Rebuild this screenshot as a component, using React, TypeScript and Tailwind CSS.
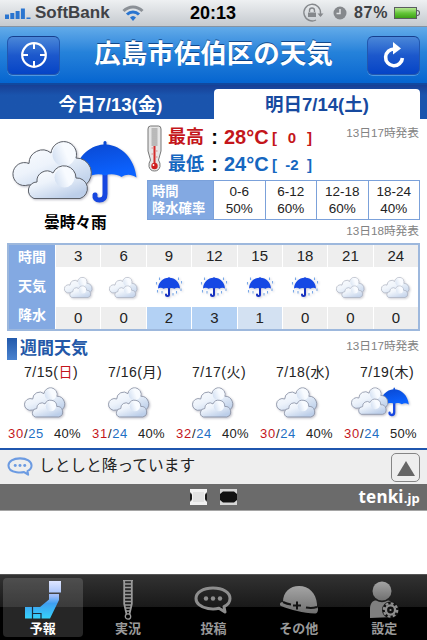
import type { ReactNode } from "react";
import clsx from "clsx";

type Weather = "cloud" | "rain" | "cloudRain";

interface Hour {
  time: number;
  weather: Weather;
  rain: number;
}

interface Day {
  date: string;
  weekday: string;
  holiday?: boolean;
  weather: Weather;
  high: number;
  low: number;
  chance: number;
}

const chances = [
  { range: "0-6", value: "50%" },
  { range: "6-12", value: "60%" },
  { range: "12-18", value: "60%" },
  { range: "18-24", value: "40%" },
];

const hours: Hour[] = [
  { time: 3, weather: "cloud", rain: 0 },
  { time: 6, weather: "cloud", rain: 0 },
  { time: 9, weather: "rain", rain: 2 },
  { time: 12, weather: "rain", rain: 3 },
  { time: 15, weather: "rain", rain: 1 },
  { time: 18, weather: "rain", rain: 0 },
  { time: 21, weather: "cloud", rain: 0 },
  { time: 24, weather: "cloud", rain: 0 },
];

const days: Day[] = [
  { date: "7/15", weekday: "日", holiday: true, weather: "cloud", high: 30, low: 25, chance: 40 },
  { date: "7/16", weekday: "月", weather: "cloud", high: 31, low: 24, chance: 40 },
  { date: "7/17", weekday: "火", weather: "cloud", high: 32, low: 24, chance: 40 },
  { date: "7/18", weekday: "水", weather: "cloud", high: 30, low: 24, chance: 40 },
  { date: "7/19", weekday: "木", weather: "cloudRain", high: 30, low: 24, chance: 50 },
];

// Shared gradients, referenced by id from every weather icon
function Gradients() {
  return (
    <svg className="absolute h-0 w-0">
      <defs>
        <linearGradient id="cloud" x1="0" y1="0" x2="0.7" y2="1">
          <stop offset="0" stopColor="#ffffff" />
          <stop offset="0.55" stopColor="#edf3fb" />
          <stop offset="1" stopColor="#c3d4ec" />
        </linearGradient>
        <linearGradient id="cloudFront" x1="0" y1="0" x2="0.6" y2="1">
          <stop offset="0" stopColor="#ffffff" />
          <stop offset="0.5" stopColor="#edf3fb" />
          <stop offset="1" stopColor="#bccee9" />
        </linearGradient>
        <linearGradient id="puff" x1="0" y1="0.7" x2="1" y2="0.3">
          <stop offset="0" stopColor="#d3e0f2" />
          <stop offset="0.6" stopColor="#f8fbff" />
        </linearGradient>
        <linearGradient id="umbrella" x1="0" y1="0" x2="0.3" y2="1">
          <stop offset="0" stopColor="#0a45cc" />
          <stop offset="1" stopColor="#0b62ff" />
        </linearGradient>
        <linearGradient id="japan" x1="0" y1="0" x2="0" y2="1">
          <stop offset="0" stopColor="#dfe6ff" />
          <stop offset="0.4" stopColor="#9dbcf8" />
          <stop offset="0.6" stopColor="#3f9ff0" />
          <stop offset="1" stopColor="#35d2fb" />
        </linearGradient>
        <linearGradient id="tabIcon" x1="0" y1="0" x2="0" y2="1">
          <stop offset="0" stopColor="#a4a4a4" />
          <stop offset="1" stopColor="#707070" />
        </linearGradient>
      </defs>
    </svg>
  );
}

function CloudShape({ thin }: { thin?: boolean }) {
  const stroke = thin ? "#8a92a6" : "#5c6068";
  const width = thin ? 1.7 : 1;
  return (
    <g stroke={stroke} strokeWidth={width} strokeLinejoin="round">
      <path
        d="M28 185A11.500 11.500 0 1 1 29 163.500A13.500 13.500 0 0 1 51 153A12.800 12.800 0 1 1 76 158A15 15 0 0 1 86 184.500Z"
        fill="url(#cloud)"
      />
      <circle cx="64" cy="154.500" r="11.500" fill="url(#puff)" stroke="none" />
      <path
        d="M34 198.500A8.500 8.500 0 0 1 37 182A10 10 0 0 1 53 173A12 12 0 0 1 76 178A10.500 10.500 0 0 1 80 198.500Z"
        fill="url(#cloudFront)"
      />
      <circle cx="64.500" cy="177.500" r="10" fill="url(#puff)" stroke="none" />
    </g>
  );
}

function UmbrellaShape() {
  return (
    <g>
      <path
        d="M105 168V194C105 198 103 200 99.500 200C96 200 94.500 198 95 195"
        fill="none"
        stroke="#1747e0"
        strokeWidth="5"
        strokeLinecap="round"
      />
      <path
        d="M103.500 142Q105 140 106.500 142V144.500C121 145.500 134.500 158 136.500 177.500C131 174 126 174 121.500 177C117 174 110 173.500 105 175.500C100 173.500 93 174 88.500 177C84 174 79 174 73.500 177.500C75.500 158 89 145.500 103.500 144.500Z"
        fill="url(#umbrella)"
      />
    </g>
  );
}

function WeatherIcon({ weather, className, thin }: { weather: Weather; className?: string; thin?: boolean }) {
  if (weather === "rain") {
    return (
      <svg viewBox="0 0 28 22" className={className}>
        <path d="M14 11V18.500C14 20.500 11 20.500 11 18.500" fill="none" stroke="#1530c0" strokeWidth="2" strokeLinecap="round" />
        <path
          d="M13.500 1H14.500V1.700C20 2.100 24.500 5.500 25 12.500C23.200 11.500 21 11.500 19.500 12.800C18 11.700 15.500 11.700 14 12.500C12.500 11.700 10 11.700 8.500 12.800C7 11.500 4.800 11.500 3 12.500C3.500 5.500 8 2.100 13.500 1.700Z"
          fill="#1648e4"
        />
        <path
          d="M4.500 1.500V4M1.500 6V8.500M2.500 14V16.500M7 15V17.500M23.500 1.500V4M26.500 5V7.500M26 12.500V15M21.500 15V17.500M18 17V19.500"
          stroke="#7aa9e8"
          strokeWidth="1.100"
        />
      </svg>
    );
  }
  return (
    <svg viewBox={weather === "cloud" ? "12 140.500 82 59.500" : "12 140 127 64"} className={clsx("drop-shadow-[1px_1px_1px_rgba(0,0,40,0.25)]", className)}>
      {weather === "cloudRain" && <UmbrellaShape />}
      <CloudShape thin={thin} />
    </svg>
  );
}

function StatusBar() {
  return (
    <div className="flex h-[27px] items-center border-b border-[#8593a3] bg-linear-to-b from-[#eef0f2] to-[#c5cacf] pl-[5px] text-[17px] font-bold text-[#3f4246]">
      <svg viewBox="0 0 26 12" className="mt-0.5 h-3 w-[26px]" fill="#2a75d0">
        <path d="M0 6.500h4V11H0zM5.300 5h4v6h-4zM10.600 3h4v8h-4zM15.900 .5h4V11h-4zM21.500 9.500h4V11h-4z" />
      </svg>
      <span className="ml-1 w-[76px]">SoftBank</span>
      <svg viewBox="0 0 22 16" className="ml-[11px] h-4 w-[22px]" fill="none" strokeWidth="3">
        <path d="M1.500 6C7 .5 15 .5 20.500 6" stroke="#8b9096" />
        <path d="M5 9.500C8.500 6 13.500 6 17 9.500" stroke="#2a75d0" />
        <path d="M8 12.500Q11 9.500 14 12.500L11 16Z" fill="#2a75d0" />
      </svg>
      <span className="ml-[46px] w-[48px] text-[18px] text-black">20:13</span>
      <svg viewBox="0 0 22 20" className="ml-[64px] h-5 w-[22px]" fill="none" stroke="#85888c" strokeWidth="1.400">
        <path d="M14 17A8.300 8.300 0 1 1 18.500 10v3" />
        <path d="M15.500 10.500h6l-3 3.500z" fill="#85888c" stroke="none" />
        <path d="M6 9.500h8V14H6z" fill="#85888c" stroke="none" />
        <path d="M7.500 9V7.500a2.500 2.500 0 0 1 5 0V9" />
      </svg>
      <svg viewBox="0 0 14 14" className="ml-[9px] h-3.5 w-3.5">
        <circle cx="7" cy="7" r="6.500" fill="#85888c" />
        <path d="M7 3v4.500H3.500" fill="none" stroke="#e2e4e6" strokeWidth="1.500" />
      </svg>
      <span className="ml-[7px] w-[37px] text-[16px] tracking-[0.7px]">87%</span>
      <div className="ml-[3px] h-3 w-[23px] border border-[#5a5d60] bg-linear-to-b from-[#b5e88f] via-[#64c638] to-[#3da116]" />
      <div className="h-1.5 w-[3px] rounded-r-sm border border-l-0 border-[#5a5d60]" />
    </div>
  );
}

function NavButton({ children }: { children: ReactNode }) {
  return (
    <button className="flex h-[39px] w-[53px] items-center justify-center rounded-[6px] border border-[#2357ae] border-t-[#163f8e] bg-linear-to-b from-[#4b87d8] via-[#1c58cc] via-50% to-[#0544c6] shadow-[0_1px_0_rgba(120,180,240,0.6)]">
      {children}
    </button>
  );
}

function Header() {
  return (
    <header className="flex h-[58px] items-center justify-between border-b-2 border-[#11489f] bg-linear-to-b from-[#62abe9] via-[#2582da] via-45% to-[#0565d0] px-[7px]">
      <NavButton>
        <svg viewBox="0 0 28 28" className="h-7 w-7" fill="none" stroke="white">
          <circle cx="14" cy="14" r="11.800" strokeWidth="2.200" />
          <path d="M14 2v6M14 20v6M2 14h6M20 14h6" strokeWidth="2" />
        </svg>
      </NavButton>
      <h1 className="-mt-0.5 text-[26.500px] leading-none font-bold text-white text-shadow-[0_-1px_0_rgba(0,40,100,0.7)]">
        広島市佐伯区の天気
      </h1>
      <NavButton>
        <svg viewBox="0 0 24 28" className="h-7 w-6">
          <path d="M12.500 8A8.400 8.400 0 1 0 20.400 17" fill="none" stroke="white" strokeWidth="3.600" />
          <path d="M11 1L19 7.500L11 13.500Z" fill="white" />
        </svg>
      </NavButton>
    </header>
  );
}

function DayTabs() {
  return (
    <div className="flex h-[34px] bg-linear-to-b from-[#173f95] to-[#1a54ad] to-30% pt-1 pr-[7px] text-[18.500px] leading-[31px] font-bold">
      <div className="w-[214px] pl-[7px] text-center text-white">今日7/13(金)</div>
      <div className="flex-1 rounded-t-[4px] bg-white text-center text-[#174a9f]">明日7/14(土)</div>
    </div>
  );
}

function Thermometer() {
  return (
    <svg viewBox="0 0 15 48" className="h-12 w-[15px]">
      <path
        d="M3.500 1H11.500Q14 1 14 4V26L11.500 35Q13.500 38 13 41.500Q12 46 7.500 46Q3 46 2 41.500Q1.500 38 3.500 35L1 26V4Q1 1 3.500 1Z"
        fill="#e6e6e6"
        stroke="#777"
      />
      <path d="M4.500 4h6M4.500 6h6M4.500 8h6M4.500 10h6M4.500 12h6M4.500 14h6M4.500 16h6M4.500 18h6M4.500 20h6" stroke="#8d8d8d" />
      <path d="M7.500 21V40" stroke="#d42b2b" strokeWidth="2" />
      <path d="M4.500 23h2M8.500 26h2M4.500 29h2M8.500 32h2" stroke="#d88" />
      <circle cx="7.500" cy="41" r="3.200" fill="#cf1e1e" />
      <circle cx="6.500" cy="40" r="0.900" fill="white" />
    </svg>
  );
}

function Issued({ children }: { children: ReactNode }) {
  return <span className="text-[11.700px] leading-4 whitespace-nowrap text-[#828282]">{children}</span>;
}

function Temperature({ label, value, diff, className }: { label: string; value: string; diff: ReactNode; className: string }) {
  return (
    <div className={clsx("flex h-[27px] items-center leading-none font-bold", className)}>
      <span className="w-[37px] text-[18px]">{label}</span>
      <span className="w-[19px] text-center text-[20px] text-black">:</span>
      <span className="w-[48px] text-[20px]">{value}</span>
      <span className="mt-0.5 flex w-[40px] justify-between text-[15px]">
        <span>[</span>
        <span>{diff}</span>
        <span>]</span>
      </span>
    </div>
  );
}

function Today() {
  return (
    <section className="flex h-[124px] pr-[7px]">
      <div className="flex w-[147px] flex-col pt-[21px] pl-3">
        <WeatherIcon weather="cloudRain" className="h-16 w-[127px]" />
        <div className="mt-[9px] pl-8 text-[15.700px] leading-5 font-bold text-black">曇時々雨</div>
      </div>
      <div className="flex flex-1 flex-col">
        <div className="flex h-[61px]">
          <div className="w-[21px] pt-[6px]">
            <Thermometer />
          </div>
          <div className="flex-1 pt-[4px]">
            <Temperature label="最高" value="28°C" diff="0" className="text-[#c4161b]" />
            <Temperature label="最低" value="24°C" diff="-2" className="text-[#1667c0]" />
          </div>
          <div className="-ml-10 pt-px pr-px">
            <Issued>13日17時発表</Issued>
          </div>
        </div>
        <div className="flex h-10 border border-[#7ba1da] text-[13.500px] leading-[17px] text-[#222]">
          <div className="w-[65px] bg-[#83a9e2] pt-0.5 pl-1 text-[13.300px] font-bold text-white">
            時間
            <br />
            降水確率
          </div>
          {chances.map((c) => (
            <div key={c.range} className="flex-1 border-l border-[#7ba1da] pt-0.5 text-center">
              {c.range}
              <br />
              {c.value}
            </div>
          ))}
        </div>
        <div className="pt-0.5 pr-px text-right leading-4">
          <Issued>13日18時発表</Issued>
        </div>
      </div>
    </section>
  );
}

function rainColor(rain: number) {
  if (rain >= 2) return "bg-[#b3d1f4]";
  if (rain === 1) return "bg-[#d3e1f2]";
  return "bg-[#eeeeee]";
}

function Hourly() {
  return (
    <section className="mx-[7px] flex h-[88px] border-2 border-[#9db8dd] text-[15px] text-[#222]">
      <div className="flex w-[46px] flex-col items-center bg-[#83a9e2] text-[14px] leading-[29px] font-bold text-white">
        <span className="-mt-0.5">時間</span>
        <span>天気</span>
        <span>降水</span>
      </div>
      {hours.map((hour) => (
        <div key={hour.time} className="ml-px flex flex-1 flex-col text-center leading-[21px]">
          <div className="h-[22px] bg-[#eeeeee]">{hour.time}</div>
          <div className="flex flex-1 items-center justify-center">
            <WeatherIcon
              weather={hour.weather}
              thin
              className={hour.weather === "rain" ? "h-[22px] w-7 drop-shadow-[1px_1px_1px_rgba(0,0,60,0.2)]" : "h-[21px] w-[29px] opacity-80"}
            />
          </div>
          <div className={clsx("h-[22px]", rainColor(hour.rain))}>{hour.rain}</div>
        </div>
      ))}
    </section>
  );
}

function Weekly() {
  return (
    <section className="h-[117px]">
      <div className="flex h-[33px] items-start pt-[7px] pr-2 pl-[7px]">
        <div className="h-[22px] w-[10px] bg-linear-to-b from-[#2259ab] to-[#4a83cf]" />
        <h2 className="ml-[3px] flex-1 text-[17px] leading-[22px] font-bold text-[#2358a8]">週間天気</h2>
        <Issued>13日17時発表</Issued>
      </div>
      <div className="flex pl-0.5">
        {days.map((day) => (
          <div key={day.date} className="w-[84px] shrink-0">
            <div className="pl-[22px] text-[14px] leading-[17px] tracking-[0.5px] whitespace-nowrap text-[#222]">
              {day.date}(<span className={clsx(day.holiday && "text-[#c4161b]")}>{day.weekday}</span>)
            </div>
            <div className={clsx("mt-[6px] h-[31px]", day.weather === "cloud" ? "pl-[22px]" : "pl-[13px]")}>
              <WeatherIcon
                weather={day.weather}
                thin
                className={day.weather === "cloud" ? "h-[31px] w-[42px]" : "h-[30px] w-[59px]"}
              />
            </div>
            <div className="mt-[7px] flex pl-[6px] text-[13px] leading-[18px] text-[#222]">
              <span className="w-[46px] tracking-[0.7px]">
                <span className="text-[#c4161b]">{day.high}</span>/<span className="text-[#1f70c4]">{day.low}</span>
              </span>
              <span className="tracking-[0.3px]">{day.chance}%</span>
            </div>
          </div>
        ))}
      </div>
    </section>
  );
}

function Bubble({ className, stroke }: { className?: string; stroke: string }) {
  return (
    <svg viewBox="0 0 38 28" className={className} fill="none" stroke={stroke} strokeWidth="3">
      <path d="M25 22.200C22 23 17 23 14 22.500C6 21.300 2 17 2 12.500C2 6.500 9 2 19 2S36 6.500 36 12.500C36 16 33.500 19 30 20.700L31 26Z" strokeLinejoin="round" />
      <g fill={stroke} stroke="none">
        <circle cx="12" cy="12.500" r="2.200" />
        <circle cx="19" cy="12.500" r="2.200" />
        <circle cx="26" cy="12.500" r="2.200" />
      </g>
    </svg>
  );
}

function CommentBar() {
  return (
    <div className="flex h-9 items-center border-t-2 border-[#1f56ae] bg-[#eeeeee] pr-[7px] pl-[7px]">
      <Bubble className="-mt-0.5 h-[19px] w-[26px]" stroke="#6c9be2" />
      <span className="-mt-0.5 ml-[6px] flex-1 text-[15.700px] leading-none text-[#222]">しとしと降っています</span>
      <button className="flex h-[29px] w-[29px] items-center justify-center rounded-[5px] border border-[#858585]">
        <svg viewBox="0 0 18 15" className="mt-0.5 h-[15px] w-[18px]">
          <path d="M9 0L18 15H0Z" fill="#666" />
        </svg>
      </button>
    </div>
  );
}

function Brand() {
  return (
    <div className="flex h-[27px] items-center border-b border-[#a5a5a5] bg-[#6b6b6b] pl-[190px]">
      <svg viewBox="0 0 17 16" className="h-4 w-[17px]">
        <path d="M0 0h17v3l-2 2v6l2 2v3H0v-3l2-2V5L0 3z" fill="#f2f2f2" />
        <path d="M0 4l2 2v4l-2 2zM17 4l-2 2v4l2 2z" fill="#1a1a1a" />
        <path d="M3 3h11v10H3z" fill="#e2e2e2" />
      </svg>
      <svg viewBox="0 0 17 16" className="ml-[13px] h-4 w-[17px]">
        <path d="M0 0h17v16H0z" fill="#d6d6d6" />
        <path d="M3 2.500h11L17 5v6l-3 2.500H3L0 11V5z" fill="#111" />
      </svg>
      <span className="-mt-0.5 ml-auto pr-[7px] font-['Noto_Sans',sans-serif] text-[17px] leading-none font-bold tracking-[0.2px] text-white">
        tenki<span className="text-[13px]">.jp</span>
      </span>
    </div>
  );
}

function JapanIcon() {
  return (
    <svg viewBox="0 0 38 40" className="h-10 w-[38px]">
      <path d="M25 1H37V12.500H25ZM25 14H35V20L26 38.500H1V27H16L25 19.500Z" fill="url(#japan)" />
      <path d="M8.500 26V39M9 33.500H17V39" stroke="#1c2c3c" strokeWidth="1.200" fill="none" />
    </svg>
  );
}

function GaugeIcon() {
  return (
    <svg viewBox="0 0 10 40" className="h-10 w-2.5" fill="none" stroke="#9a9a9a">
      <path d="M1.200 0V24L3.500 34M8.800 0V24L6.500 34" strokeWidth="1.800" />
      <path d="M0 .7H10M1 4H9M1 7.500H9M1 11H9M1 14.500H9M1 18H9M1 21.500H9M2 25H8M2.500 28H7.500M3 31H7" strokeWidth="1.300" />
      <circle cx="5" cy="36.500" r="2.700" strokeWidth="1.300" />
    </svg>
  );
}

function HelmetIcon() {
  return (
    <svg viewBox="0 0 40 30" className="h-[30px] w-10">
      <path d="M4 17C4 7 11 1 20 1C30 1 37 8 38 19V22C40 23 39 29 36 28.500C24 28 12 25 2 21C0 19.500 1 17 4 17Z" fill="url(#tabIcon)" />
      <path d="M4 17Q8 19 12 19.500M27 22.500Q33 23.500 38 22M18 16.500V24.500M14 20.500H22" stroke="#141414" strokeWidth="2" fill="none" />
    </svg>
  );
}

function UserGearIcon() {
  return (
    <svg viewBox="0 0 30 38" className="h-[38px] w-[30px]">
      <circle cx="13" cy="10" r="9.500" fill="url(#tabIcon)" />
      <path d="M1 37V28C1 22 4 19.500 7 19.500Q13 23 19 19.500C23 20 25 24 25 28V36Z" fill="#7f7f7f" />
      <circle cx="21.500" cy="29" r="8.500" fill="#111" />
      <circle cx="21.500" cy="29" r="6.700" fill="none" stroke="#909090" strokeWidth="2.200" strokeDasharray="2.900 2.360" />
      <circle cx="21.500" cy="29" r="4.600" fill="none" stroke="#909090" strokeWidth="2.400" />
      <circle cx="21.500" cy="29" r="1.100" fill="#909090" />
    </svg>
  );
}

const tabs = [
  { label: "予報", icon: <JapanIcon /> },
  { label: "実況", icon: <GaugeIcon /> },
  { label: "投稿", icon: <Bubble className="h-7 w-[38px]" stroke="#8d8d8d" /> },
  { label: "その他", icon: <HelmetIcon /> },
  { label: "設定", icon: <UserGearIcon /> },
];

function TabBar() {
  return (
    <nav className="flex h-[66px] border-t border-[#555] bg-linear-to-b from-[#323232] via-[#191919] via-50% to-black to-50% pt-[3px]">
      {tabs.map((tab, i) => (
        <div
          key={tab.label}
          className={clsx(
            "mx-[2.700px] flex h-[59px] w-20 flex-col items-center rounded-[4px] text-[13px] leading-4 font-bold",
            i === 0 ? "bg-white/15 text-white" : "text-[#999]"
          )}
        >
          <div className="flex h-[43px] items-center justify-center">{tab.icon}</div>
          {tab.label}
        </div>
      ))}
    </nav>
  );
}

function App() {
  return (
    <div className="flex h-[640px] w-[427px] flex-col overflow-hidden bg-white font-['Liberation_Sans','Noto_Sans_CJK_JP',sans-serif]">
      <Gradients />
      <StatusBar />
      <Header />
      <DayTabs />
      <Today />
      <Hourly />
      <Weekly />
      <CommentBar />
      <Brand />
      <div className="flex-1" />
      <TabBar />
    </div>
  );
}

export default App;
